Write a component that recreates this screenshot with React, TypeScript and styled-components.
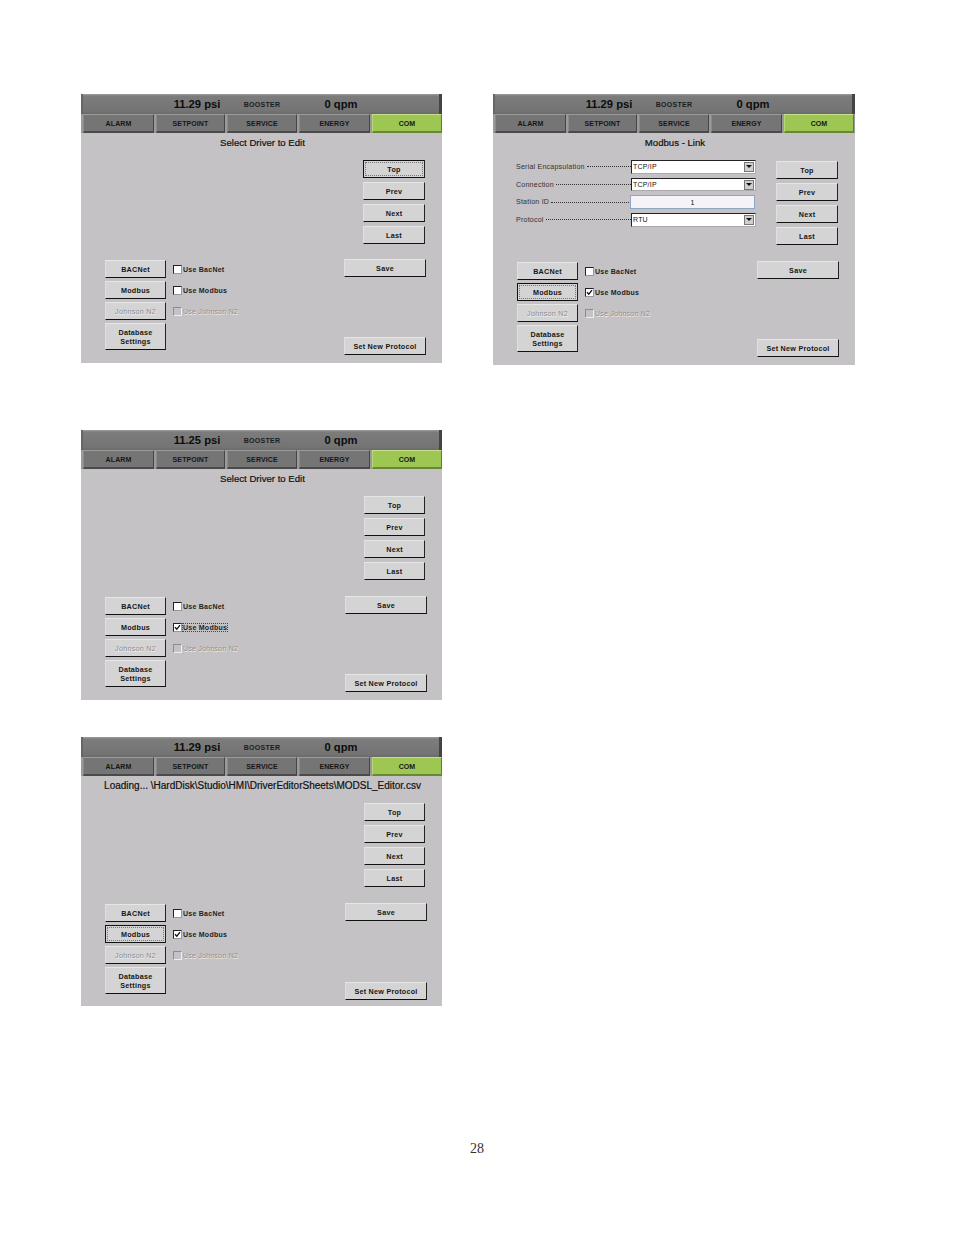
import React from "react";
import styled, { createGlobalStyle } from "styled-components";

const Global = createGlobalStyle`
  html, body { margin: 0; padding: 0; background: #fff; }
  body { font-family: "Liberation Sans", Arial, sans-serif; }
  #root { height: 1235px; overflow: hidden; }
`;

const Page = styled.div`
  width: 954px;
  height: 1235px;
  display: flex;
  flex-direction: column;
`;
const Columns = styled.div`
  display: grid;
  grid-template-columns: 361px 362px;
  column-gap: 51px;
  padding: 94px 0 0 81px;
  align-items: start;
`;
const Column = styled.div`
  display: flex;
  flex-direction: column;
`;
const PageNumber = styled.div`
  margin-top: auto;
  padding-bottom: 78px;
  text-align: center;
  font-family: "Liberation Serif", "Times New Roman", serif;
  font-size: 14px;
  line-height: 16px;
  color: #333;
`;

const ScreenBox = styled.section<{ $h: number; $top: number; $w: number }>`
  width: ${(p) => p.$w}px;
  height: ${(p) => p.$h}px;
  margin-top: ${(p) => p.$top}px;
  background: #c4c2c5;
  display: flex;
  flex-direction: column;
  overflow: hidden;
`;
const Header = styled.header`
  height: 20px;
  flex: none;
  box-sizing: border-box;
  display: grid;
  grid-template-columns: 64px 66px 92px;
  padding-left: 82px;
  align-items: center;
  background: linear-gradient(#a0a0a0 0, #7c7c7c 2px, #747474 17px, #6a6a6a 20px);
  border-left: 2px solid #666;
  border-right: 3px solid #444;
  color: #0c0c0c;
`;
const Reading = styled.span`
  font-size: 11.2px;
  font-weight: 700;
  text-align: center;
  white-space: nowrap;
`;
const Station = styled.span`
  font-size: 7px;
  font-weight: 700;
  letter-spacing: 0.3px;
  text-align: center;
  color: #1c1c1c;
`;
const Tabs = styled.nav`
  height: 19px;
  flex: none;
  display: grid;
  grid-template-columns: 71px 69px 70px 71px 70px;
  column-gap: 2px;
  padding-left: 2px;
  background: #9a9a9a;
`;
const Tab = styled.div<{ $active?: boolean }>`
  box-sizing: border-box;
  display: flex;
  align-items: center;
  justify-content: center;
  padding-top: 1px;
  font-size: 7px;
  font-weight: 700;
  letter-spacing: 0.1px;
  color: #161616;
  background: ${(p) => (p.$active ? "#9dc653" : "#757575")};
  border-top: 1px solid ${(p) => (p.$active ? "#c8e08c" : "#9c9c9c")};
  border-left: 1px solid ${(p) => (p.$active ? "#b7d67a" : "#8a8a8a")};
  border-right: 1px solid ${(p) => (p.$active ? "#5f7f2c" : "#454545")};
  border-bottom: 2px solid ${(p) => (p.$active ? "#668a31" : "#4a4a4a")};
`;
const Title = styled.h2<{ $wide?: boolean }>`
  margin: 0;
  height: 20px;
  flex: none;
  padding-left: 2px;
  font-size: ${(p) => (p.$wide ? "10px" : "9.6px")};
  font-weight: 400;
  line-height: 20px;
  text-align: center;
  white-space: nowrap;
  color: #111;
  -webkit-text-stroke: 0.2px #111;
`;
const Upper = styled.div<{ $h: number }>`
  height: ${(p) => p.$h}px;
  flex: none;
  display: grid;
  grid-template-columns: 1fr 62px;
  padding-right: 17px;
  align-items: start;
`;
const NavStack = styled.div<{ $top: number; $nudge: number }>`
  grid-column: 2;
  grid-row: 1;
  margin-top: ${(p) => p.$top}px;
  margin-left: ${(p) => p.$nudge}px;
  display: flex;
  flex-direction: column;
  gap: 4px;
`;
const Button = styled.button<{ $h?: number; $focus?: boolean; $off?: boolean }>`
  box-sizing: border-box;
  width: 100%;
  height: ${(p) => p.$h ?? 18}px;
  padding: 0;
  display: flex;
  align-items: center;
  justify-content: center;
  text-align: center;
  font-family: inherit;
  font-size: 7.2px;
  line-height: 9px;
  letter-spacing: 0.25px;
  color: ${(p) => (p.$off ? "#8b8b8b" : "#161616")};
  font-weight: ${(p) => (p.$off ? 400 : 700)};
  text-shadow: ${(p) => (p.$off ? "0.5px 0.5px 0 #f2f2f2" : "none")};
  background: #d5d4d5;
  border: 0;
  border-top: 1px solid ${(p) => (p.$focus ? "#111" : "#e6e6e6")};
  border-left: 1px solid ${(p) => (p.$focus ? "#111" : "#e0e0e0")};
  border-right: 1px solid #222;
  border-bottom: 1px solid #111;
  outline: ${(p) => (p.$focus ? "1px dotted #777" : "none")};
  outline-offset: -3px;
`;
const Lower = styled.div<{ $bottom: number; $right: number }>`
  flex: 1;
  display: grid;
  grid-template-columns: 61px 1fr 82px;
  column-gap: 7px;
  padding: 0 ${(p) => p.$right}px ${(p) => p.$bottom}px 24px;
`;
const DriverButtons = styled.div`
  display: flex;
  flex-direction: column;
  gap: 3px;
  margin-top: 1px;
`;
const ChecksColumn = styled.div`
  display: flex;
  flex-direction: column;
  gap: 3px;
  margin-top: 1px;
`;
const CheckRow = styled.div`
  height: 18px;
  display: flex;
  align-items: center;
  gap: 1px;
`;
const Box = styled.span<{ $off?: boolean }>`
  box-sizing: border-box;
  width: 9px;
  height: 9px;
  flex: none;
  display: flex;
  background: ${(p) => (p.$off ? "#c4c2c5" : "#fff")};
  border: 1px solid ${(p) => (p.$off ? "#8c8c8c" : "#222")};
  border-right-color: ${(p) => (p.$off ? "#eee" : "#999")};
  border-bottom-color: ${(p) => (p.$off ? "#eee" : "#999")};
`;
const CheckLabel = styled.span<{ $off?: boolean; $focus?: boolean }>`
  font-size: 7px;
  font-weight: ${(p) => (p.$off ? 400 : 700)};
  letter-spacing: 0.25px;
  white-space: nowrap;
  color: ${(p) => (p.$off ? "#8e8e8e" : "#222")};
  text-shadow: ${(p) => (p.$off ? "0.5px 0.5px 0 #efefef" : "none")};
  outline: ${(p) => (p.$focus ? "1px dotted #444" : "none")};
`;
const ActionColumn = styled.div`
  display: flex;
  flex-direction: column;
  justify-content: space-between;
`;
const Form = styled.div`
  grid-column: 1;
  grid-row: 1;
  margin: 7px 0 0 23px;
  width: 240px;
  display: flex;
  flex-direction: column;
  gap: 4px;
`;
const FormRow = styled.div`
  height: 13.7px;
  display: flex;
  align-items: center;
  font-size: 7.1px;
  letter-spacing: 0.2px;
  color: #333;
`;
const Leader = styled.span`
  flex: 1;
  min-width: 0;
  margin: 0 0 0 2px;
  border-bottom: 1px dotted #333;
`;
const Select = styled.div`
  box-sizing: border-box;
  width: 125px;
  height: 100%;
  flex: none;
  display: flex;
  align-items: center;
  justify-content: space-between;
  background: #fff;
  border: 1px solid #222;
  border-right-color: #aaa;
  border-bottom-color: #aaa;
  padding-left: 1px;
  font-size: 7px;
  color: #111;
`;
const Arrow = styled.span`
  width: 10px;
  height: 10px;
  margin-right: 1px;
  flex: none;
  box-sizing: border-box;
  background: #cfcfcf;
  border: 1px solid #777;
  display: flex;
  align-items: center;
  justify-content: center;
  &::after {
    content: "";
    border-left: 3px solid transparent;
    border-right: 3px solid transparent;
    border-top: 3px solid #111;
  }
`;
const NumberField = styled.div`
  box-sizing: border-box;
  width: 125px;
  height: 100%;
  flex: none;
  margin-left: -1px;
  margin-right: 1px;
  display: flex;
  align-items: center;
  justify-content: center;
  background: #f6f3f8;
  border: 1px solid #8fa7c6;
  font-size: 7px;
  color: #111;
`;

const Tick = () => (
  <svg width="7" height="7" viewBox="0 0 7 7">
    <path d="M1 3.2 L2.8 5.2 L6 1.2" fill="none" stroke="#111" strokeWidth="1.3" />
  </svg>
);

type Field = { label: string; value: string; kind: "select" | "number" };

type ScreenProps = {
  top: number;
  w?: number;
  h: number;
  psi: string;
  title: string;
  wideTitle?: boolean;
  focus?: "top" | "modbus";
  modbus?: boolean;
  modbusLabelFocus?: boolean;
  form?: Field[];
  upper: number;
  navTop: number;
  nudge?: number;
  bottom?: number;
};

const Screen = ({ top, w = 361, h, psi, title, wideTitle, focus, modbus, modbusLabelFocus, form, upper, navTop, nudge = 0, bottom = 8 }: ScreenProps) => (
  <ScreenBox $top={top} $h={h} $w={w}>
    <Header>
      <Reading>{psi} psi</Reading>
      <Station>BOOSTER</Station>
      <Reading>0 qpm</Reading>
    </Header>
    <Tabs>
      <Tab>ALARM</Tab>
      <Tab>SETPOINT</Tab>
      <Tab>SERVICE</Tab>
      <Tab>ENERGY</Tab>
      <Tab $active>COM</Tab>
    </Tabs>
    <Title $wide={wideTitle}>{title}</Title>
    <Upper $h={upper}>
      {form && (
        <Form>
          {form.map((f) => (
            <FormRow key={f.label}>
              {f.label}
              <Leader />
              {f.kind === "select" ? (
                <Select>
                  {f.value}
                  <Arrow />
                </Select>
              ) : (
                <NumberField>{f.value}</NumberField>
              )}
            </FormRow>
          ))}
        </Form>
      )}
      <NavStack $top={navTop} $nudge={nudge}>
        <Button $focus={focus === "top"}>Top</Button>
        <Button>Prev</Button>
        <Button>Next</Button>
        <Button>Last</Button>
      </NavStack>
    </Upper>
    <Lower $bottom={bottom} $right={16 - nudge}>
      <DriverButtons>
        <Button>BACNet</Button>
        <Button $focus={focus === "modbus"}>Modbus</Button>
        <Button $off>Johnson N2</Button>
        <Button $h={27}>
          Database
          <br />
          Settings
        </Button>
      </DriverButtons>
      <ChecksColumn>
        <CheckRow>
          <Box />
          <CheckLabel>Use BacNet</CheckLabel>
        </CheckRow>
        <CheckRow>
          <Box>{modbus && <Tick />}</Box>
          <CheckLabel $focus={modbusLabelFocus}>Use Modbus</CheckLabel>
        </CheckRow>
        <CheckRow>
          <Box $off />
          <CheckLabel $off>Use Johnson N2</CheckLabel>
        </CheckRow>
      </ChecksColumn>
      <ActionColumn>
        <Button>Save</Button>
        <Button>Set New Protocol</Button>
      </ActionColumn>
    </Lower>
  </ScreenBox>
);

const linkFields: Field[] = [
  { label: "Serial Encapsulation", value: "TCP/IP", kind: "select" },
  { label: "Connection", value: "TCP/IP", kind: "select" },
  { label: "Station ID", value: "1", kind: "number" },
  { label: "Protocol", value: "RTU", kind: "select" },
];

export default function App() {
  return (
    <Page>
      <Global />
      <Columns>
        <Column>
          <Screen top={0} h={269} psi="11.29" title="Select Driver to Edit" focus="top" upper={106} navTop={7} />
          <Screen top={67} h={270} psi="11.25" title="Select Driver to Edit" modbus modbusLabelFocus upper={107} navTop={7} nudge={1} />
          <Screen top={37} h={269} psi="11.29" title="Loading... \HardDisk\Studio\HMI\DriverEditorSheets\MODSL_Editor.csv" wideTitle focus="modbus" modbus upper={107} navTop={7} nudge={1} bottom={6} />
        </Column>
        <Column>
          <Screen top={0} w={362} h={271} psi="11.29" title="Modbus - Link" focus="modbus" modbus upper={108} navTop={8} form={linkFields} />
        </Column>
      </Columns>
      <PageNumber>28</PageNumber>
    </Page>
  );
}
